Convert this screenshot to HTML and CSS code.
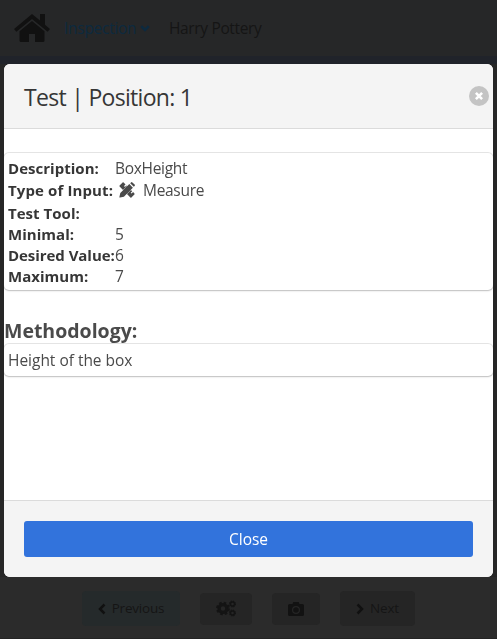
FILE: index.html
```
<!DOCTYPE html>
<html lang="en">
<head>
<meta charset="utf-8">
<title>Inspection</title>
<link rel="stylesheet" href="styles.css">
</head>
<body>
<div class="page">
  <nav class="navbar">
    <svg class="home" viewBox="0 0 36 28"><path d="M18 0 0 15l2.400 2.700L18 5l15.600 12.700L36 15l-5-4.200V0h-5v6.600z"/><path d="M18 7 5.500 17.200V26.500Q5.500 28 7 28h8v-8h6v8h8q1.500 0 1.500-1.500v-9.300z"/></svg>
    <a class="nav-link">Inspection</a>
    <svg class="chev-down" viewBox="0 0 10 7"><path d="M1.200 1.200 5 5l3.800-3.800"/></svg>
    <span class="user">Harry Pottery</span>
  </nav>
  <div class="band"></div>
  <main class="backdrop"></main>
  <div class="actions">
    <button class="btn prev"><svg class="chev" viewBox="0 0 8 12"><path d="M6.500 1.500 2 6l4.500 4.500"/></svg><span>Previous</span></button>
    <button class="btn small"><svg class="cogs" viewBox="0 0 20 17"><circle class="ring" cx="7" cy="8.500" r="3.900"/><circle class="teeth" cx="7" cy="8.500" r="5.900"/><circle class="ring-s" cx="16.500" cy="4" r="2"/><circle class="teeth-s" cx="16.500" cy="4" r="2.900"/><circle class="ring-s" cx="16.500" cy="13" r="2"/><circle class="teeth-s" cx="16.500" cy="13" r="2.900"/></svg></button>
    <button class="btn small"><svg class="camera" viewBox="0 0 16 14"><path fill-rule="evenodd" d="M1.500 2H4.500L5.300 0h5.400l.8 2h3Q16 2 16 3.500v9Q16 14 14.500 14h-13Q0 14 0 12.500v-9Q0 2 1.500 2zM8 4a4 4 0 1 0 0 8 4 4 0 0 0 0-8zm0 1.200a2.800 2.800 0 1 1 0 5.600 2.800 2.800 0 0 1 0-5.600z"/></svg></button>
    <button class="btn next"><svg class="chev" viewBox="0 0 8 12"><path d="M1.500 1.500 6 6l-4.500 4.500"/></svg><span>Next</span></button>
  </div>
  <div class="bottom"></div>
</div>

<section class="modal">
  <header class="modal-head">
    <h1 class="title">Test | Position: 1</h1>
    <button class="close" aria-label="close"><svg viewBox="0 0 20 20"><path d="m6.900 6.900 6.200 6.200M13.100 6.900l-6.200 6.200"/></svg></button>
  </header>
  <div class="modal-body">
    <dl class="box details">
      <dt>Description:</dt><dd>BoxHeight</dd>
      <dt class="tall">Type of Input:</dt><dd class="tall measure"><svg class="tool" viewBox="0 0 16 16"><path d="M3.600.6.600 3.600q-.5.500 0 1l10.800 10.800q.5.500 1 0l3-3q.5-.5 0-1l-1.300-1.300-1.500 1.500-.9-.9 1.500-1.500-1.800-1.800-1.500 1.500-.9-.9L10.500 6.500 7.400 3.400 5.900 4.900 5 4l1.500-1.500L4.600.6q-.5-.5-1 0z"/><path class="pencil" d="M10.300 2.100 1.300 11.100.400 15q-.1.700.6.600l3.900-.9 9-9zM11.200 1.200l3.600 3.600.8-.8q.7-.7 0-1.400L13.400.4q-.7-.7-1.400 0z"/></svg><span>Measure</span></dd>
      <dt>Test Tool:</dt><dd></dd>
      <dt>Minimal:</dt><dd>5</dd>
      <dt class="desired">Desired Value:</dt><dd>6</dd>
      <dt>Maximum:</dt><dd>7</dd>
    </dl>
    <h2 class="subtitle">Methodology:</h2>
    <div class="box method"><span>Height of the box</span></div>
  </div>
  <footer class="modal-foot"><button class="primary">Close</button></footer>
</section>
</body>
</html>
```
FILE: styles.css
```
* { box-sizing: border-box; }
body, h1, h2, dl, dd { margin: 0; }
body { height: 639px; overflow: hidden; font: 15.5px/21px "Open Sans", "Noto Sans", sans-serif; color: #4a4a4a; background: #2b2b2b; }
button { font: inherit; border: 0; padding: 0; }
svg { display: block; flex: none; }
.page { height: 639px; display: flex; flex-direction: column; }
.navbar { height: 56px; display: flex; align-items: center; padding-left: 14px; background: #262728; }
.home { width: 36px; height: 28px; fill: #111; }
.nav-link { margin-left: 14px; width: 74px; color: #0d2a3f; letter-spacing: -.28px; }
.chev-down { width: 10px; height: 7px; margin-left: 2px; fill: none; stroke: #0d2a3f; stroke-width: 2.600; }
.user { margin-left: 19px; color: #151515; letter-spacing: -.35px; white-space: nowrap; }
.band { height: 8px; background: #20232a; }
.backdrop { flex: 1; background: #262626; }
.actions { height: 61px; padding: 2px 0 0 82px; display: flex; align-items: center; background: #2b2b2b; }
.btn { display: flex; align-items: center; justify-content: center; gap: 6px; height: 35px; border-radius: 4px; background: #252525; color: #151515; font-size: 13.500px; letter-spacing: -.2px; }
.btn.prev { width: 98px; background: #252a2b; }
.btn.next { width: 75px; margin-left: 20px; }
.btn.small { width: 52px; height: 32px; margin-left: 20px; }
.btn.small + .small { width: 48px; }
.chev { width: 8px; height: 12px; fill: none; stroke: #111; stroke-width: 2.500; }
.cogs { width: 20px; height: 17px; fill: none; stroke: #141414; }
.ring { stroke-width: 3.400; }
.teeth { stroke-width: 2; stroke-dasharray: 2.600 2.034; }
.ring-s { stroke-width: 1.500; }
.teeth-s { stroke-width: 1.200; stroke-dasharray: 1.400 .878; }
.camera { width: 16px; height: 14px; fill: #121212; }
.bottom { height: 1px; background: #242424; }

.modal { position: fixed; inset: 64px 4px 62px; display: flex; flex-direction: column; border-radius: 6px; overflow: hidden; background: #fff; }
.modal-head { height: 65px; display: flex; align-items: center; justify-content: space-between; padding: 0 4px 0 20px; background: #f4f4f4; border-bottom: 1px solid #dbdbdb; }
.title { font-size: 23px; line-height: 32px; font-weight: 400; color: #363636; letter-spacing: -.7px; padding-top: 2px; }
.close { width: 20px; height: 20px; border-radius: 50%; background: #c4c4c4; }
.close svg { width: 20px; height: 20px; fill: none; stroke: #fff; stroke-width: 2.600; }
.modal-body { flex: 1; padding-top: 23px; }
.box { border-radius: 5px; background: #fff; box-shadow: 0 1px 2px rgba(10,10,10,.18), 0 0 0 1px rgba(10,10,10,.1); }
.details { height: 137px; margin-top: 1px; padding: 5px 4px; display: grid; grid-template-columns: 107px 1fr; grid-template-rows: 21px 24px repeat(4, 21px); white-space: nowrap; letter-spacing: -.3px; }
dt { color: #363636; font-weight: 700; font-size: 15px; letter-spacing: .03px; }
.desired { letter-spacing: -.05px; }
.tall { line-height: 22px; }
dt.tall { letter-spacing: .12px; }
.measure { display: flex; align-items: flex-start; }
.tool { width: 16px; height: 16px; margin: 3px 8px 0 4px; fill: #4a4a4a; }
.pencil { stroke: #fff; stroke-width: .8; paint-order: stroke; }
.subtitle { margin-top: 28px; height: 26px; font-size: 19.500px; line-height: 25px; font-weight: 700; letter-spacing: 0; }
.method { height: 32px; padding: 6px 4px; letter-spacing: -.02px; }
.modal-foot { height: 77px; padding: 20px; background: #f4f4f4; border-top: 1px solid #dbdbdb; }
.primary { display: block; width: 100%; height: 36px; border-radius: 3px; background: #3273dc; color: #fff; letter-spacing: 0; }
```
